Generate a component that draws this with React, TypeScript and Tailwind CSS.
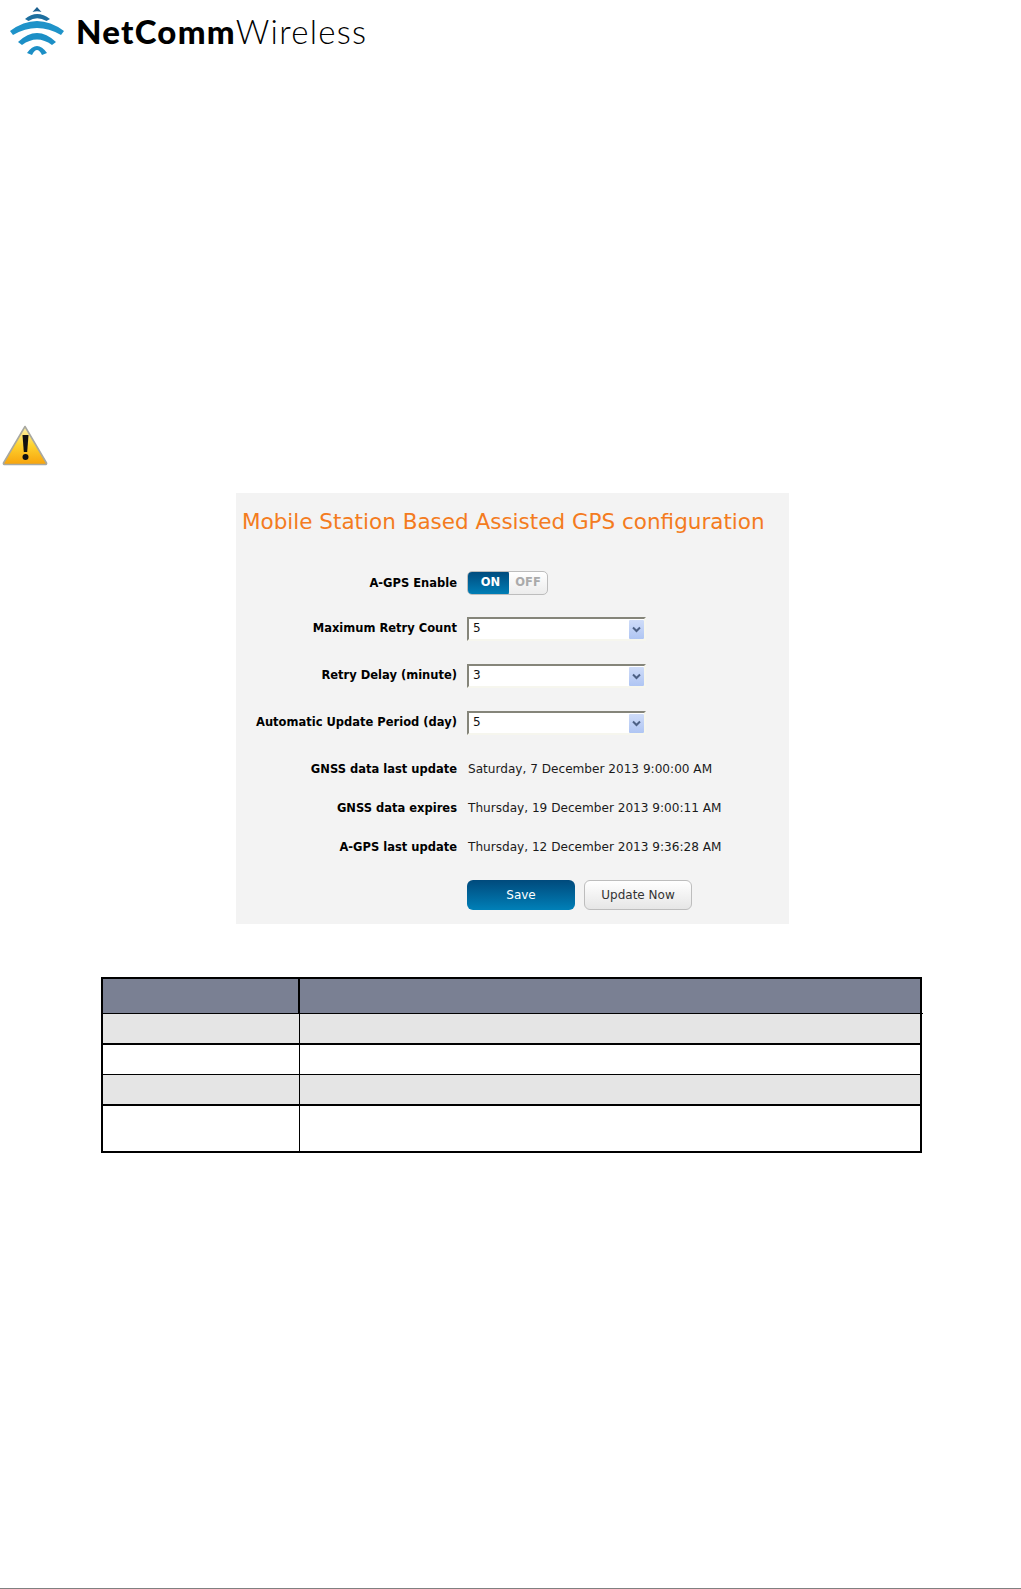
import { ReactNode } from 'react';

const verdana = "font-['DejaVu_Sans',sans-serif]";

function Logo() {
    return (
        <div className="flex items-center h-[58px] pl-[10px]">
            <svg width="55" height="50" viewBox="0 0 55 50" fill="none" className="shrink-0 mt-[2px]">
                <path d="M27 0 L31.5 5 Q27 3.5 22.5 5 Z" fill="#1c5f8f" />
                <path d="M15 12 Q27 2 40 12 L36.5 14 Q27 8.5 18.5 14 Z" fill="#1d6f9f" />
                <path d="M0 24 Q27 4 54 24 L51 28 Q27 14 3 28 Z" fill="#1f93c9" />
                <path d="M8 35 Q27 17 46 35 L42 38 Q27 27 12 38 Z" fill="#1c8fc6" />
                <path d="M17 46 Q27 32 37 46 L32 48 Q27 38 22 48 Z" fill="#1c8fc6" />
            </svg>
            <div className="ml-[11px] text-[33px] leading-none tracking-[1.25px] text-black font-['Lato',sans-serif]">
                <span className="font-black">NetComm</span>
                <span className="font-light">Wireless</span>
            </div>
        </div>
    );
}

function WarningIcon() {
    return (
        <svg width="46" height="41" viewBox="0 0 46 41" className="ml-[2px]">
            <defs>
                <linearGradient id="warn" x1="0" y1="0" x2="0" y2="1">
                    <stop offset="0" stopColor="#fdf2b0" />
                    <stop offset="0.5" stopColor="#fdd22f" />
                    <stop offset="1" stopColor="#f7a30c" />
                </linearGradient>
            </defs>
            <path d="M23 1.5 L44.5 38 Q45 39.5 43 39.5 L3 39.5 Q1 39.5 1.5 38 Z" fill="url(#warn)" stroke="#a8a8a0" strokeWidth="1.6" strokeLinejoin="round" />
            <path d="M20.5 10 L26.5 10 L25.2 27 L21.8 27 Z" fill="#111" />
            <circle cx="23.5" cy="32" r="3" fill="#111" />
        </svg>
    );
}

function Row({ label, className, labelClass = '', children }: { label: string; className: string; labelClass?: string; children: ReactNode }) {
    return (
        <div className={`flex items-center ${className}`}>
            <div className={`w-[221px] shrink-0 text-right text-[11.5px] leading-[16px] font-bold text-black ${labelClass}`}>{label}</div>
            <div className="ml-[10px]">{children}</div>
        </div>
    );
}

function Select({ value }: { value: string }) {
    return (
        <div className="relative w-[179px] h-[24px] bg-white border-t-2 border-l-2 border-t-[#85857a] border-l-[#85857a] border-b-2 border-r-2 border-b-[#f6f6ee] border-r-[#f6f6ee] pl-[4px] text-[12px] leading-[18px] text-[#111]">
            {value}
            <div className="absolute right-0 top-[1px] w-[15px] h-[19px] rounded-[1px] bg-gradient-to-b from-[#cfdcf8] to-[#afc5f3] flex items-center justify-center">
                <svg width="9" height="7" viewBox="0 0 9 7" fill="none">
                    <path d="M1 1.5 L4.5 5 L8 1.5" stroke="#4d6185" strokeWidth="2" />
                </svg>
            </div>
        </div>
    );
}

function Toggle() {
    return (
        <div className="flex w-[81px] h-[24px] rounded-[5px] border border-[#bdbdbd] bg-gradient-to-b from-white to-[#ececec] overflow-hidden text-[11.5px] font-bold">
            <div className="w-[42px] -m-[1px] mr-0 rounded-l-[5px] rounded-r-[3px] bg-gradient-to-b from-[#004a7c] to-[#0080b8] text-white flex items-center justify-center pl-[5px]">ON</div>
            <div className="flex-1 text-[#aaaaaa] flex items-center justify-center">OFF</div>
        </div>
    );
}

function Panel() {
    return (
        <div className={`w-[553px] h-[431px] bg-[#f3f3f3] ml-[236px] pt-[15px] ${verdana}`}>
            <h1 className="pl-[6px] text-[21.5px] leading-[28px] font-normal text-[#f47b20] whitespace-nowrap">
                Mobile Station Based Assisted GPS configuration
            </h1>
            <Row label="A-GPS Enable" className="mt-[35px] h-[24px]"><Toggle /></Row>
            <Row label="Maximum Retry Count" labelClass="pb-[2px]" className="mt-[22px] h-[24px]"><Select value="5" /></Row>
            <Row label="Retry Delay (minute)" labelClass="pb-[2px]" className="mt-[23px] h-[24px]"><Select value="3" /></Row>
            <Row label="Automatic Update Period (day)" labelClass="pb-[2px]" className="mt-[23px] h-[24px]"><Select value="5" /></Row>
            <Row label="GNSS data last update" labelClass="pt-[2px]" className="mt-[25px] h-[16px]">
                <span className="pl-[1px] text-[12.1px] leading-[16px] text-[#1a1a1a] whitespace-nowrap">Saturday, 7 December 2013 9:00:00 AM</span>
            </Row>
            <Row label="GNSS data expires" labelClass="pt-[2px]" className="mt-[23px] h-[16px]">
                <span className="pl-[1px] text-[12.1px] leading-[16px] text-[#1a1a1a] whitespace-nowrap">Thursday, 19 December 2013 9:00:11 AM</span>
            </Row>
            <Row label="A-GPS last update" labelClass="pt-[2px]" className="mt-[23px] h-[16px]">
                <span className="pl-[1px] text-[12.1px] leading-[16px] text-[#1a1a1a] whitespace-nowrap">Thursday, 12 December 2013 9:36:28 AM</span>
            </Row>
            <div className="flex ml-[231px] mt-[26px] gap-[9px]">
                <button className="w-[108px] h-[30px] rounded-[6px] bg-gradient-to-b from-[#004a7c] to-[#0080b8] text-white text-[12px]">Save</button>
                <button className="w-[108px] h-[30px] rounded-[6px] border border-[#bdbdbd] bg-gradient-to-b from-white to-[#e6e6e6] text-[#333] text-[12px]">Update Now</button>
            </div>
        </div>
    );
}

const rows = [
    { h: 'h-[29px]', bg: 'bg-[#e5e5e5]', border: 'border-b-2' },
    { h: 'h-[29px]', bg: 'bg-white', border: 'border-b' },
    { h: 'h-[29px]', bg: 'bg-[#e5e5e5]', border: 'border-b-2' },
    { h: 'h-[45px]', bg: 'bg-white', border: '' },
];

function SpecTable() {
    return (
        <div className="relative ml-[101px] w-[821px] border-2 border-black">
            <div className="flex h-[34px] bg-[#7a8093] border-b border-black box-content">
                <div className="w-[197px] border-r-2 border-black" />
                <div className="flex-1" />
            </div>
            <div className="absolute right-[-3px] top-[34px] w-[3px] h-[1px] bg-black" />
            {rows.map((row, idx) => (
                <div key={idx} className={`flex box-content ${row.h} ${row.bg} ${row.border} border-black`}>
                    <div className="w-[197px] border-r border-black" />
                    <div className="flex-1" />
                </div>
            ))}
        </div>
    );
}

export default function App() {
    return (
        <div className="flex flex-col h-[1589px] bg-white overflow-hidden">
            <div className="pt-[2px]"><Logo /></div>
            <div className="mt-[365px]"><WarningIcon /></div>
            <div className="mt-[27px]"><Panel /></div>
            <div className="mt-[53px]"><SpecTable /></div>
            <div className="mt-auto h-[1px] bg-[#808080]" />
        </div>
    );
}
